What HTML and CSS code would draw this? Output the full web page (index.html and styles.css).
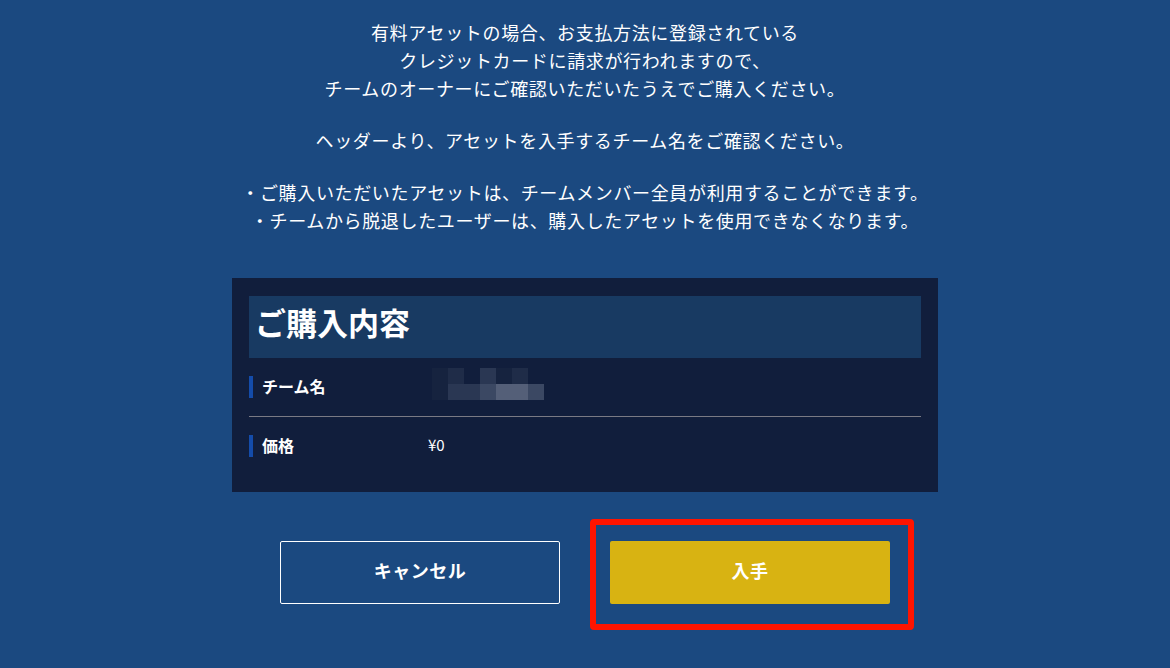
FILE: index.html
```html
<!DOCTYPE html>
<html lang="ja">
<head>
<meta charset="utf-8">
<title>ご購入内容</title>
<link rel="stylesheet" href="styles.css">
</head>
<body>
<main class="page">
  <section class="intro">
    <p>有料アセットの場合、お支払方法に登録されている<br>クレジットカードに請求が行われますので、<br>チームのオーナーにご確認いただいたうえでご購入ください。</p>
    <p>ヘッダーより、アセットを入手するチーム名をご確認ください。</p>
    <p>・ご購入いただいたアセットは、チームメンバー全員が利用することができます。<br>・チームから脱退したユーザーは、購入したアセットを使用できなくなります。</p>
  </section>

  <section class="card">
    <h2 class="card-title">ご購入内容</h2>
    <div class="row">
      <div class="label">チーム名</div>
      <div class="value">
        <div class="mosaic">
          <span class="m1"></span><span class="m2"></span><span class="m0"></span><span class="m3"></span><span class="m1"></span><span class="m2"></span><span class="m0"></span><span class="m0"></span>
          <span class="m1"></span><span class="m3"></span><span class="m3"></span><span class="m4"></span><span class="m5"></span><span class="m5"></span><span class="m4"></span><span class="m0"></span>
        </div>
      </div>
    </div>
    <div class="row">
      <div class="label">価格</div>
      <div class="value price">¥0</div>
    </div>
  </section>

  <div class="actions">
    <button class="btn btn-cancel" type="button">キャンセル</button>
    <div class="btn-wrap">
      <button class="btn btn-get" type="button">入手</button>
      <span class="highlight"></span>
    </div>
  </div>
</main>
</body>
</html>
```

FILE: styles.css
```css
* { box-sizing: border-box; }

html, body {
  margin: 0;
  padding: 0;
}

body {
  background: #1b4980;
  color: #ffffff;
  font-family: "Noto Sans CJK JP", "Noto Sans", sans-serif;
  height: 668px;
  overflow: hidden;
}

.page {
  width: 706px;
  margin: 0 auto;
  padding-top: 18px;
}

.intro {
  text-align: center;
  font-size: 18px;
  line-height: 28px;
  letter-spacing: 0.65px;
  margin: 0 -60px;
}

.intro p {
  margin: 0 0 24px;
}

.intro p:last-child {
  margin-bottom: 0;
}

.card {
  margin-top: 44px;
  background: #111e3c;
  padding: 18px 17px;
}

.card-title {
  margin: 0;
  height: 62px;
  background: #183a62;
  font-size: 31px;
  font-weight: 700;
  line-height: 52px;
  padding-left: 6px;
  letter-spacing: 0;
}

.row {
  display: flex;
  align-items: center;
  height: 58px;
}

.row + .row {
  border-top: 1px solid #7a7a84;
  height: 58px;
}

.label {
  width: 179px;
  flex: none;
  font-size: 16px;
  font-weight: 700;
  line-height: 20px;
  border-left: 4px solid #144caa;
  padding-left: 9px;
  padding-bottom: 2px;
}

.value {
  font-size: 15px;
}

.price {
  padding-bottom: 2px;
}

.mosaic {
  display: grid;
  grid-template-columns: repeat(8, 16px);
  grid-template-rows: repeat(2, 16px);
  margin-left: 4px;
  margin-top: -6px;
}

.mosaic span { display: block; }
.m0 { background: #111e3c; }
.m1 { background: #16233f; }
.m2 { background: #1f2c48; }
.m3 { background: #2a3753; }
.m4 { background: #3b4863; }
.m5 { background: #545f78; }

.actions {
  display: flex;
  justify-content: center;
  gap: 50px;
  margin-top: 49px;
}

.btn {
  width: 280px;
  height: 63px;
  border-radius: 2px;
  font-family: "Noto Sans CJK JP", "Noto Sans", sans-serif;
  font-size: 18px;
  font-weight: 700;
  color: #ffffff;
  cursor: pointer;
  display: block;
  padding: 0 0 5px;
  letter-spacing: 0.5px;
}

.btn-cancel {
  background: transparent;
  border: 1px solid #ffffff;
}

.btn-wrap {
  position: relative;
}

.btn-get {
  background: #d8b312;
  border: none;
}

.highlight {
  position: absolute;
  left: -20px;
  right: -24px;
  top: -22px;
  bottom: -26px;
  border: 6px solid #ff1400;
  border-radius: 4px;
  pointer-events: none;
}
```
